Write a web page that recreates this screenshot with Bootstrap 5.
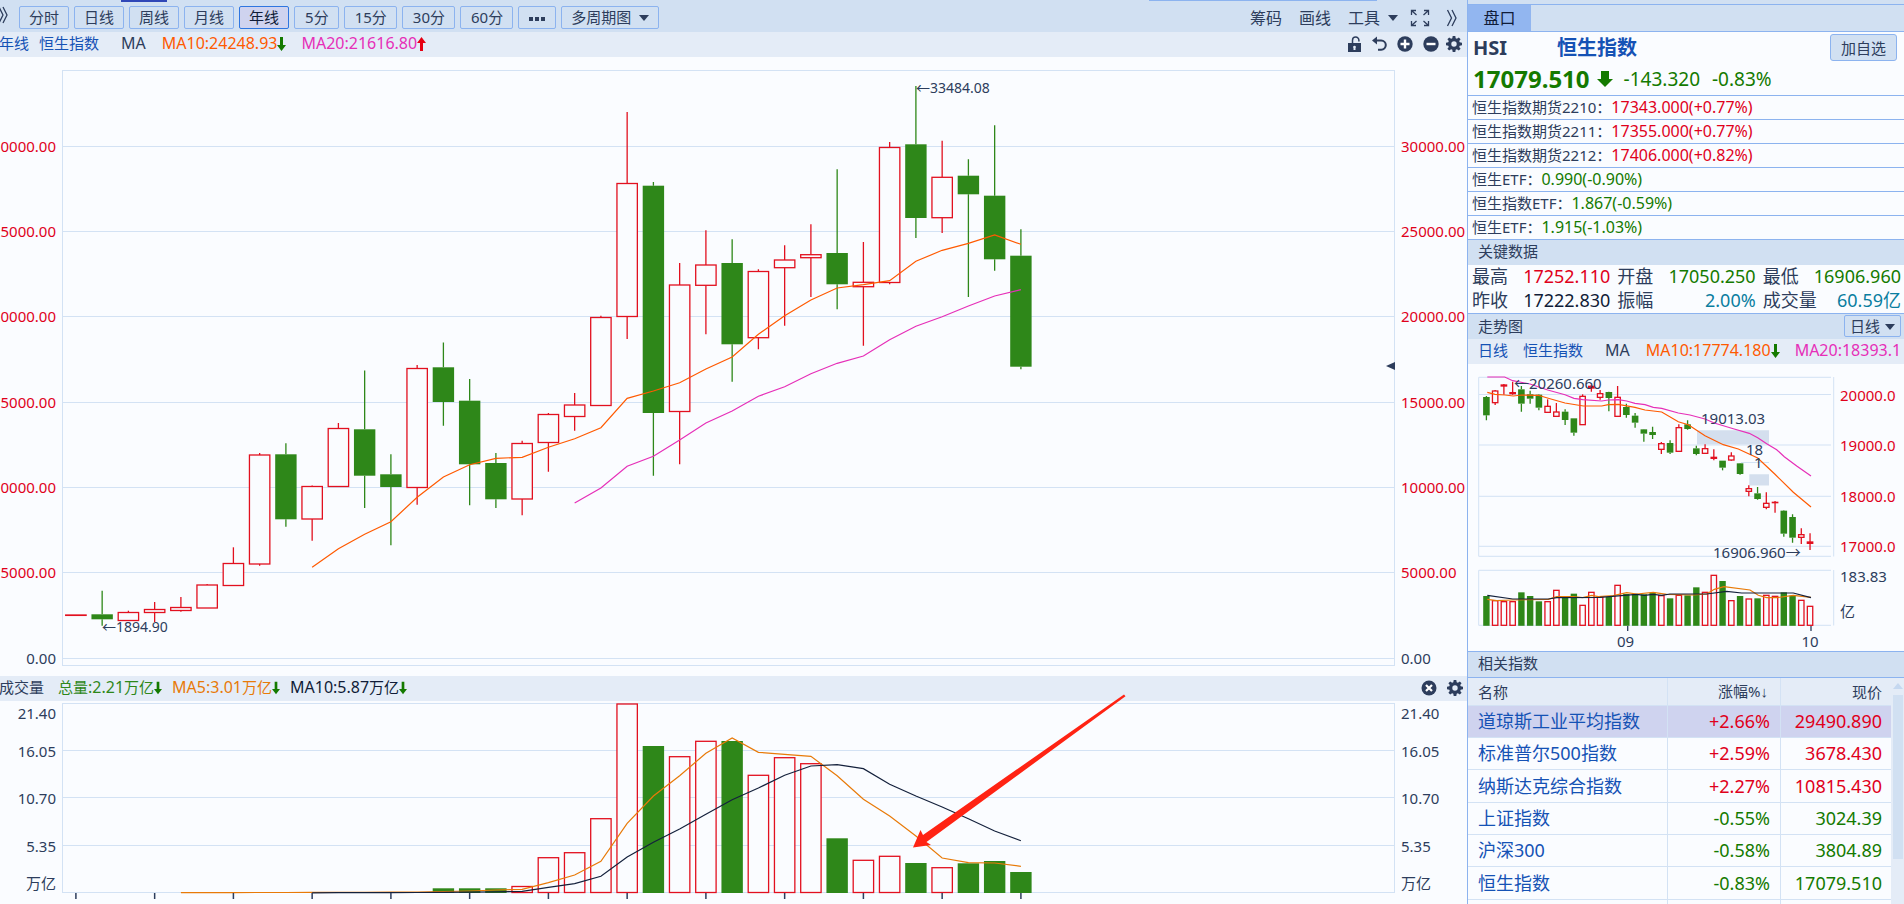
<!DOCTYPE html>
<html lang="zh-CN">
<head>
<meta charset="utf-8">
<meta name="viewport" content="width=device-width, initial-scale=1">
<title>恒生指数 HSI</title>
<link href="https://cdn.jsdelivr.net/npm/bootstrap@5.3.0/dist/css/bootstrap.min.css" rel="stylesheet">
<style>
:root{--ink:#2d3d5c;--navy:#101c38;--bar:#d1e0f2;--pale:#e4ecf7;--bg:#fafcff;--edge:#8cb3ef;--grid:#d3e2f4;--up:#e0001b;--down:#147a00;--link:#1552b5;--orange:#ff5a00;--amber:#e87a08;--pink:#e62fb8;--cyan:#0a7ea0}
body{font-family:"Noto Sans","Noto Sans CJK SC",sans-serif;font-size:15px;line-height:20px;color:var(--ink);background:var(--bg);overflow:hidden}
.terminal{display:grid;grid-template-columns:minmax(0,1fr) 437px;height:100vh;overflow:hidden}
a{color:var(--link);text-decoration:none}
.up{color:var(--up)}.down{color:var(--down)}.c-orange{color:var(--orange)}.c-amber{color:var(--amber)}.c-pink{color:var(--pink)}.c-cyan{color:var(--cyan)}.c-navy{color:var(--navy)}
.toolbar{height:32px;background:var(--bar);gap:5px;padding-right:9px;position:relative}
.toolbar::before,.toolbar::after{content:"";position:absolute;top:0;height:2px}
.toolbar::before{left:121px;width:46px;background:#2f47b8}
.toolbar::after{right:90px;width:228px;height:1px;background:var(--edge)}
.periods{display:flex;gap:5px;padding-top:6px}
.tool{font-size:15px;line-height:20px;color:var(--ink);background:transparent;border:1px solid var(--edge);border-radius:2px;padding:0 9px 1px;height:23px;white-space:nowrap}
.tool.wide{padding-left:10px}
.tool.current{background:#cfd3ef;border-color:#2f76e0;color:var(--navy)}
.plain{border:0;background:transparent;padding:0;color:var(--ink);font-size:16px;line-height:20px;display:inline-flex;align-items:center}
.caret{display:inline-block;border:5px solid transparent;border-top:6px solid var(--ink);border-bottom:0;margin-left:8px;vertical-align:2px}
.legend-bar{height:25px;background:var(--pale);white-space:nowrap;overflow:hidden;line-height:23px;padding-bottom:2px}
.legend-bar svg{flex:none}
.ma{font-size:16px}
.ma .cn{font-size:15px}
.chart{display:block;width:100%;height:auto;overflow:visible}
.chart text{fill:var(--ink);font-size:15px}
.chart .note{font-size:14px}
.chart text.up{fill:var(--up)}
.side{border-left:1px solid var(--edge);overflow:hidden;background:var(--bg)}
.tabs{border-top:4px solid var(--bar);background:var(--bar);height:32px}
.tabs-in{border-top:1px solid var(--edge);border-bottom:1px solid var(--edge);height:28px}
.tab-on{background:#92b6f0;border:0;width:63px;font-size:16px;color:var(--navy);padding:0 0 1px}
.quote-row{line-height:22px;height:24px;border-top:1px solid var(--edge);padding-left:4px}
.quote-row span{font-size:16px}
.sect{height:26px;line-height:23px;border-top:1px solid var(--edge);background:var(--bar);padding-left:10px;padding-bottom:1px}
.key-grid{display:grid;grid-template-columns:repeat(3,1fr);height:48px;font-size:18px;line-height:23px}
.key-grid>div{display:flex;justify-content:space-between;padding:0 3px 0 4px}
.idx{width:423px;table-layout:fixed;border-collapse:separate;border-spacing:0;font-size:18px;line-height:24px}
.idx th{font-weight:400;font-size:15px;background:var(--pale);height:28px;padding:0 9px 0 10px;border-bottom:1px solid var(--grid)}
.idx td{height:32px;padding:0 9px 1px 10px;border-bottom:1px solid var(--grid)}
.idx tbody tr:nth-child(3n) td{height:33px}
.idx th+th,.idx td+td{border-left:1px solid var(--grid);text-align:right}
.idx th:nth-child(2){padding-right:12px}.idx td:nth-child(2){padding-right:10px}
.idx .chosen td{background:#cfd3ef}
.sort-arrow{font-family:"Liberation Sans",sans-serif}
.scroll{flex:1;background:var(--pale);padding:5px 1px 0 2px}
.scroll i{display:block;margin:0 auto 6px;width:10px;border:5px solid transparent;border-bottom:6px solid #c5d8f0;border-top:0}
.scroll b{display:block;background:var(--bar);height:164px}
</style>
</head>
<body>
<svg width="0" height="0" class="position-absolute" aria-hidden="true">
<defs>
<symbol id="gear" viewBox="0 0 16 16"><path fill="#2d3d5c" fill-rule="evenodd" d="M6.700 0h2.600l.4 2.300 1.200.5L12.800 1.400l1.800 1.800-1.400 1.900.5 1.200 2.300.4v2.600l-2.300.4-.5 1.200 1.400 1.900-1.800 1.800-1.900-1.400-1.200.5L9.300 16H6.700l-.4-2.300-1.200-.5-1.900 1.400-1.800-1.800 1.400-1.900-.5-1.200L0 9.300V6.700l2.300-.4.500-1.200-1.400-1.900 1.800-1.800 1.900 1.400 1.200-.5zM8 5.300a2.700 2.700 0 1 0 0 5.400 2.700 2.700 0 0 0 0-5.400z"/></symbol>
<symbol id="fall" viewBox="0 0 9 16"><path fill="#147a00" d="M3 1h3v8h3l-4.500 6L0 9h3z"/></symbol>
<symbol id="rise" viewBox="0 0 9 16"><path fill="#e60012" d="M3 15h3V7h3L4.500 1 0 7h3z"/></symbol>
</defs>
</svg>
<div class="terminal">
<main>
  <div class="toolbar d-flex align-items-start">
    <button class="plain mt-1" style="width:14px;height:22px" aria-label="展开"><svg width="9" height="18" viewBox="0 0 9 18" fill="none" stroke="#2d3d5c" stroke-width="1.300"><path d="M-1 1l4 8-4 8M3 1l4 8-4 8"/></svg></button>
    <div class="periods" id="periods"></div>
    <div class="ms-auto d-flex align-items-center pt-2">
      <button class="plain" style="margin-right:17px">筹码</button>
      <button class="plain" style="margin-right:17px">画线</button>
      <button class="plain">工具<span class="caret"></span></button>
      <button class="plain ms-2 ps-1" aria-label="全屏"><svg width="20" height="18" viewBox="0 0 20 18" fill="none" stroke="#2d3d5c" stroke-width="1.300"><path d="M1.500 6V1.500H6M1.500 1.500l5 4.500M14 1.500h4.500V6M18.500 1.500l-5 4.500M1.500 12v4.500H6M1.500 16.500l5-4.500M14 16.500h4.500V12M18.500 16.500l-5-4.500"/></svg></button>
      <button class="plain ms-3" aria-label="更多"><svg width="12" height="18" viewBox="0 0 12 18" fill="none" stroke="#2d3d5c" stroke-width="1.300"><path d="M1.500 1l4 8-4 8M6 1l4 8-4 8"/></svg></button>
    </div>
  </div>
  <div class="legend-bar d-flex align-items-center">
    <a href="#" style="margin:0 10px 0 -1px">年线</a><a href="#" style="margin-right:22px">恒生指数</a><span class="ma" style="margin-right:16px">MA</span>
    <span class="ma c-orange">MA10:24248.93</span><svg width="9" height="16" style="margin-right:15px"><use href="#fall"/></svg>
    <span class="ma c-pink">MA20:21616.80</span><svg width="9" height="16"><use href="#rise"/></svg>
    <div class="ms-auto d-flex align-items-center" style="gap:10px;padding-right:5px">
      <svg width="14" height="16" viewBox="0 0 14 16"><path fill="#2d3d5c" fill-rule="evenodd" d="M0 7h13v9H0zM6.500 9.700a1.400 1.400 0 0 0-1 2.400V14h2v-1.900a1.400 1.400 0 0 0-1-2.400z"/><path d="M4.500 7V4.200a3.200 3.200 0 0 1 6.400 0V5.500" fill="none" stroke="#2d3d5c" stroke-width="1.500"/></svg>
      <svg width="15" height="16" viewBox="0 0 15 16"><path d="M3 4.500h6.200a4.600 4.600 0 0 1 0 9.200H6" fill="none" stroke="#2d3d5c" stroke-width="2"/><path d="M0 4.500L5 .5v8z" fill="#2d3d5c"/></svg>
      <svg width="16" height="16" viewBox="0 0 16 16"><circle cx="8" cy="8" r="7.700" fill="#2d3d5c"/><path d="M8 3.500v9M3.500 8h9" stroke="#fff" stroke-width="2.400"/></svg>
      <svg width="16" height="16" viewBox="0 0 16 16"><circle cx="8" cy="8" r="7.700" fill="#2d3d5c"/><path d="M3.500 8h9" stroke="#fff" stroke-width="2.400"/></svg>
      <svg width="16" height="16" style="margin-left:-3px"><use href="#gear"/></svg>
    </div>
  </div>
  <svg class="chart" id="price" viewBox="0 57 1467 619" role="img" aria-label="年线K线图"></svg>
  <div class="legend-bar d-flex align-items-center">
    <span style="margin:0 14px 0 -1px">成交量</span>
    <span class="ma" style="color:#2e8719"><span class="cn">总量</span>:2.21<span class="cn">万亿</span></span><svg width="8" height="16" style="margin-right:10px"><use href="#fall"/></svg>
    <span class="ma c-amber">MA5:3.01<span class="cn">万亿</span></span><svg width="8" height="16" style="margin-right:10px"><use href="#fall"/></svg>
    <span class="ma c-navy">MA10:5.87<span class="cn">万亿</span></span><svg width="8" height="16"><use href="#fall"/></svg>
    <div class="ms-auto d-flex align-items-center" style="gap:10px;padding-right:4px">
      <svg width="16" height="16" viewBox="0 0 16 16"><circle cx="8" cy="8" r="7.500" fill="#2d3d5c"/><path d="M5 5l6 6M11 5l-6 6" stroke="#fff" stroke-width="2.200"/></svg>
      <svg width="16" height="16"><use href="#gear"/></svg>
    </div>
  </div>
  <svg class="chart" id="volume" viewBox="0 701 1467 203" role="img" aria-label="成交量"></svg>
</main>

<aside class="side">
  <div class="tabs"><div class="tabs-in d-flex"><button class="tab-on">盘口</button></div></div>
  <div class="d-flex align-items-center" style="height:31px;padding:0 7px 0 5px">
    <strong style="font-size:20px;width:84px">HSI</strong>
    <a href="#" class="fw-bold" style="font-size:20px">恒生指数</a>
    <button class="tool ms-auto" style="height:27px;background:var(--bar);border-radius:3px;padding:0 10px">加自选</button>
  </div>
  <div class="d-flex align-items-center down" style="height:32px;padding:0 0 1px 5px;font-size:19px">
    <strong style="font-size:24px;line-height:28px">17079.510</strong>
    <svg width="16" height="16" viewBox="0 0 16 16" style="margin:0 11px 0 7px"><path fill="#147a00" d="M4 0h8v8h4l-8 8-8-8h4z"/></svg>
    <span style="margin-right:12px">-143.320</span><span>-0.83%</span>
  </div>
  <div class="quote-row">恒生指数期货2210：<span class="up">17343.000(+0.77%)</span></div>
  <div class="quote-row">恒生指数期货2211：<span class="up">17355.000(+0.77%)</span></div>
  <div class="quote-row">恒生指数期货2212：<span class="up">17406.000(+0.82%)</span></div>
  <div class="quote-row">恒生ETF：<span class="down">0.990(-0.90%)</span></div>
  <div class="quote-row">恒生指数ETF：<span class="down">1.867(-0.59%)</span></div>
  <div class="quote-row">恒生ETF：<span class="down">1.915(-1.03%)</span></div>
  <div class="sect">关键数据</div>
  <div class="key-grid">
    <div><span>最高</span><span class="up">17252.110</span></div>
    <div><span>开盘</span><span class="down">17050.250</span></div>
    <div><span>最低</span><span class="down">16906.960</span></div>
    <div><span>昨收</span><span class="c-navy">17222.830</span></div>
    <div><span>振幅</span><span class="c-cyan">2.00%</span></div>
    <div><span>成交量</span><span class="c-cyan">60.59亿</span></div>
  </div>
  <div class="sect d-flex align-items-center" style="padding-right:3px">走势图<button class="tool ms-auto" style="height:22px;padding:0 5px">日线<span class="caret" style="margin-left:5px"></span></button></div>
  <div class="legend-bar d-flex align-items-center" style="padding-left:10px">
    <a href="#" style="margin-right:15px">日线</a><a href="#" style="margin-right:22px">恒生指数</a><span class="ma" style="margin-right:16px">MA</span>
    <span class="ma c-orange">MA10:17774.180</span><svg width="9" height="16" style="margin-right:15px"><use href="#fall"/></svg>
    <span class="ma c-pink">MA20:18393.1</span>
  </div>
  <svg class="chart" id="daily" viewBox="8 24 436 287" role="img" aria-label="日线走势图"></svg>
  <div class="sect">相关指数</div>
  <div class="d-flex border-top" style="--bs-border-color:var(--edge)">
    <table class="idx">
      <colgroup><col style="width:199px"><col style="width:113px"><col></colgroup>
      <thead><tr><th>名称</th><th>涨幅%<span class="sort-arrow">↓</span></th><th>现价</th></tr></thead>
      <tbody>
        <tr class="chosen"><td><a href="#">道琼斯工业平均指数</a></td><td class="up">+2.66%</td><td class="up">29490.890</td></tr>
        <tr><td><a href="#">标准普尔500指数</a></td><td class="up">+2.59%</td><td class="up">3678.430</td></tr>
        <tr><td><a href="#">纳斯达克综合指数</a></td><td class="up">+2.27%</td><td class="up">10815.430</td></tr>
        <tr><td><a href="#">上证指数</a></td><td class="down">-0.55%</td><td class="down">3024.39</td></tr>
        <tr><td><a href="#">沪深300</a></td><td class="down">-0.58%</td><td class="down">3804.89</td></tr>
        <tr><td><a href="#">恒生指数</a></td><td class="down">-0.83%</td><td class="down">17079.510</td></tr>
        <tr><td></td><td></td><td></td></tr>
      </tbody>
    </table>
    <div class="scroll"><i></i><b></b></div>
  </div>
</aside>
</div>

<script>
const RED='#e2101f', GREEN='#2e8719';
const periods=['分时','日线','周线','月线','年线','5分','15分','30分','60分','more','多周期图'];
document.getElementById('periods').innerHTML=periods.map((p,i)=>{
  const more=p==='more';
  const body=more?'<svg width="18" height="4" viewBox="0 0 18 4"><path d="M1 0h4v4H1zM7 0h4v4H7zM13 0h4v4h-4z" fill="#2d3d5c"/></svg>':p+(i===10?'<span class="caret"></span>':'');
  const cls='tool'+(i===4?' current':'')+(i>4&&i<9?' wide':'');
  return `<button class="${cls}"${more?' aria-label="更多周期"':''}>${body}</button>`;
}).join('');

const hline=(x1,x2,y,w=1)=>`<path d="M${x1} ${y}H${x2}" stroke="#d3e2f4" stroke-width="${w}" fill="none"/>`;
const text=(x,y,s,cls='',anchor='start')=>`<text x="${x}" y="${y}" class="${cls}" text-anchor="${anchor}">${s}</text>`;
const line=(pts,color,w=1.200)=>`<polyline points="${pts.map(p=>p.join()).join(' ')}" fill="none" stroke="${color}" stroke-width="${w}"/>`;
// One candle: kind (r/g), high, body top, body bottom, low
function candle(x,w,[k,h,t,b,l]){
  const c=k==='r'?RED:GREEN;
  let s=`<path d="M${x} ${h}V${t}M${x} ${b}V${l}" stroke="${c}" stroke-width="1.300"/>`;
  if(k==='g') s+=`<rect x="${x-w/2-.5}" y="${t}" width="${w+1}" height="${b-t}" fill="${c}"/>`;
  else s+=`<rect x="${x-w/2}" y="${t}" width="${w}" height="${Math.max(b-t,.1)}" fill="${b-t>2.200?'#fafcff':c}" stroke="${c}" stroke-width="1.300"/>`;
  return s;
}
function bar(x,w,k,t,base){
  return k==='g'?`<rect x="${x-w/2-.5}" y="${t}" width="${w+1}" height="${base+.5-t}" fill="${GREEN}"/>`
    :`<rect x="${x-w/2}" y="${t}" width="${w}" height="${base-t}" fill="#fafcff" stroke="${RED}" stroke-width="1.300"/>`;
}
const X=i=>75.9+26.25*i;

// Yearly price
const yearly=[['r',615,615,615.4,615],['g',590.7,614.3,619.3,625.7],['r',610.7,612.5,620.5,620.5],['r',602,609.5,612.5,622],['r',597,607.5,610.5,611.7],['r',584,585,608,608],['r',547.3,563.5,585.5,585.5],['r',453,455,564,565.7],['g',443.3,454.3,519.3,526.7],['r',485.5,486.5,519,540.7],['r',423,428.5,486.5,486.5],['g',370.4,429.3,475.7,508],['g',454.3,474.3,487,545.3],['r',365,368.5,487.5,504.7],['g',342.5,367.3,402,425.7],['g',379,400.7,464.3,505.3],['g',453,463,499.3,508],['r',440.7,443.5,499,515.3],['r',413,414.5,442.5,471.7],['r',393,405,416.5,430.7],['r',315.7,317.5,405.5,405.5],['r',112,183.5,316.5,339],['g',182,185.7,413,475.7],['r',263,285,411.5,464.3],['r',230.3,265,285.3,334.3],['g',239.3,263,344.3,381.7],['r',269.3,271.5,337.7,349.3],['r',245.3,260,267.7,325.7],['r',224.3,254.7,257.7,297],['g',169.3,253,284.3,309.3],['r',242,282.3,286.7,345.7],['r',142,147.5,282.5,284.3],['g',86,144.3,218,238],['r',140.7,177.3,217.7,233],['g',159.3,175.7,194.3,297],['g',125.3,195.7,259.3,270.7],['g',229.3,255.7,366.7,369.3]];
const ma10=[567.3,548.7,534.3,521.7,497.3,477,464.7,458.3,457.3,447.3,438.7,427.7,398.3,391,382.7,369,357,334.3,315.7,300,288,284.7,280.7,261.3,250.3,243.3,235,244.3];
const ma20=[503,488,466.3,456.3,440,423,411,396.3,386.7,373.7,363.3,356,339.7,326.3,316.7,306,296,289.7];
let s='<rect x="62.5" y="70.500" width="1332" height="595" fill="none" stroke="#d3e2f4"/>';
[[146.5,'30000.00'],[231.5,'25000.00'],[316.5,'20000.00'],[402.5,'15000.00'],[487.5,'10000.00'],[572.5,'5000.00'],[658.5,'0.00']].forEach(([y,t])=>{
  const c=t==='0.00'?'':'up';
  s+=hline(62,1395,y)+text(56,y+5.5,t,c,'end')+text(1401,y+5.5,t,c);
});
yearly.forEach((d,i)=>s+=candle(X(i),20.4,d));
s+=line(ma10.map((y,i)=>[X(i+9),y]),'#ff5a00')+line(ma20.map((y,i)=>[X(i+19),y]),'#e62fb8');
s+=text(102,632,'←1894.90','note')+text(916,93,'←33484.08','note')+'<path d="M1386 366l9-4v8z" fill="#2d3d5c"/>';
document.getElementById('price').innerHTML=s;

// Yearly volume
const vol='g888.3 g888.3 g888.3 r886.5 r857.7 r852.7 r818.7 r704 g746 r756.7 r741.3 g741 r775.3 r757.7 r763.7 g838.3 r860.3 r856.3 g863 r867.7 g863.3 g861 g872'.split(' ');
const v5=[892.6,892.6,892.6,892.5,892.5,892.4,892.4,892.3,892.2,892,891.5,891,890,889.3,882.7,875,861.3,823.3,796,775.7,753.3,738,752.3,754.3,756.3,775.7,799.3,816,836,858,862.7,863,866.3];
const v10=[892.8,892.7,892.7,892.6,892.5,892.4,892.2,891.8,891.3,887.3,883.7,876.3,857,842.3,829,814.3,799.7,788,775.3,766,764.7,768.7,784.3,796,807,818.7,831,840.7];
s='<rect x="62.5" y="703.500" width="1332" height="189" fill="none" stroke="#d3e2f4"/>'+hline(62,1395,750.5)+hline(62,1395,797.5)+hline(62,1395,845.5);
[[719,'21.40'],[757,'16.05'],[804,'10.70'],[852,'5.35'],[889,'万亿']].forEach(([y,t])=>s+=text(56,y,t,'','end')+text(1401,y,t));
vol.forEach((v,i)=>s+=bar(X(i+14),20.4,v[0],+v.slice(1),892.5));
s+=line(v5.map((y,i)=>[X(i+4),y]),'#e87a08')+line(v10.map((y,i)=>[X(i+9),y]),'#14213c');
for(let i=0;i<37;i+=3) s+=`<path d="M${X(i)} 893V899" stroke="#2d3d5c" stroke-width="1.500"/>`;
s+='<path d="M1124 694.500L923 835l-2.500-5L913 847.500l18-2.500-4.500-3L1125.500 696.300z" fill="#ff2313"/>';
document.getElementById('volume').innerHTML=s;

// Daily price and volume; data is kept in thirds of a drawing unit
const D=i=>26.4+8.747*i;
const daily='g168,171,226,241 r150,153,188,195 r132,135,138,164 r125,158,161,164 g138,148,191,215 g152,163,176,191 g163,164,203,211 r178,199,217,217 r189,216,229,229 g208,215,240,255 g235,235,278,287 r163,169,254,254 r135,139,144,155 r150,161,172,179 g155,156,174,214 r138,172,229,229 g191,201,225,233 g219,227,248,263 g267,268,281,305 g260,276,285,297 r306,311,328,342 g301,309,338,342 r253,263,334,334 g241,253,267,269 g317,325,342,346 r313,326,340,340 r328,352,355,361 g362,362,383,391 r337,348,360,362 g369,370,402,404 r436,446,454,469 g441,460,477,479 r457,490,502,508 r483,487,488,518 g511,512,581,590 g523,531,593,608 r565,584,592,612 r580,606,610,630'.split(' ');
const dvol=[768,782,785,785,757,768,784,785,751,771,761,796,757,771,771,736,762,763,763,758,767,775,766,766,742,757,706,723,782,768,777,775,766,769,757,767,781,799];
const path=(str,c)=>line(str.split(' ').map(p=>p.split(',').map(n=>(n/3).toFixed(1))),c);
s='<path d="M371 37.300H18.700V216.300H371M373.700 37V216.500M371 230.300H18.700V285.300H371M373.700 230V285.500" fill="none" stroke="#d3e2f4"/>';
[[54.5,'20000.0'],[105,'19000.0'],[156.300,'18000.0'],[206.300,'17000.0']].forEach(([y,t])=>s+=hline(19,371,y)+text(380,Math.round(y)+6,t,'up'));
s+='<path d="M237 90.300h72v14.300h-72zM289.300 134.300h19.700v11.300h-19.700z" fill="#d4dfee"/>'+hline(281,309,122.5);
s+=text(380,242,'183.83')+text(380,277,'亿')+text(165.500,307,'09','','middle')+text(350,307,'10','','middle');
daily.forEach((d,i)=>s+=candle(D(i),d[0]==='g'?5.600:5.400,[d[0],...d.slice(1).split(',').map(n=>n/3)]));
s+=path('82,157 105,163 135,165 160,168 185,165 235,166 265,175 315,189 370,198 425,198 445,194 475,193 525,202 555,210 605,216 655,245 685,254 735,287 790,314 835,327 893,354 945,403 1000,457 1053,501','#ff5a00');
s+=path('82,111 134,111 158,122 210,132 263,150 315,164 342,175 368,179 425,183 445,180 475,179 500,183 525,190 555,194 580,202 605,205 655,219 690,225 735,237 763,249 820,266 868,280 893,293 920,311 950,329 973,350 1010,378 1053,408','#e62fb8');
s+=text(54,49,'←20260.660')+text(241,84,'19013.03')+text(286,115,'18')+text(294,128,'1')+text(253,218,'16906.960→');
dvol.forEach((t,i)=>s+=bar(D(i),5.400,daily[i][0],t/3,285.3));
s+=path('82,778 110,782 157,780 265,778 290,770 340,770 368,773 395,766 415,770 460,767 500,758 530,762 580,757 620,763 700,765 740,762 763,748 792,740 870,750 895,766 920,773 950,773 1000,766 1053,772','#e87a08');
s+=path('82,766 158,777 265,777 290,773 420,772 530,763 553,766 580,763 605,766 630,762 740,762 800,754 845,759 1000,759 1053,773','#14213c');
s+='<path d="M167.700 286v5M351 286v5" stroke="#2d3d5c" stroke-width="1.300"/>';
document.getElementById('daily').innerHTML=s;
</script>
<script src="https://cdn.jsdelivr.net/npm/bootstrap@5.3.0/dist/js/bootstrap.bundle.min.js"></script>
</body>
</html>
